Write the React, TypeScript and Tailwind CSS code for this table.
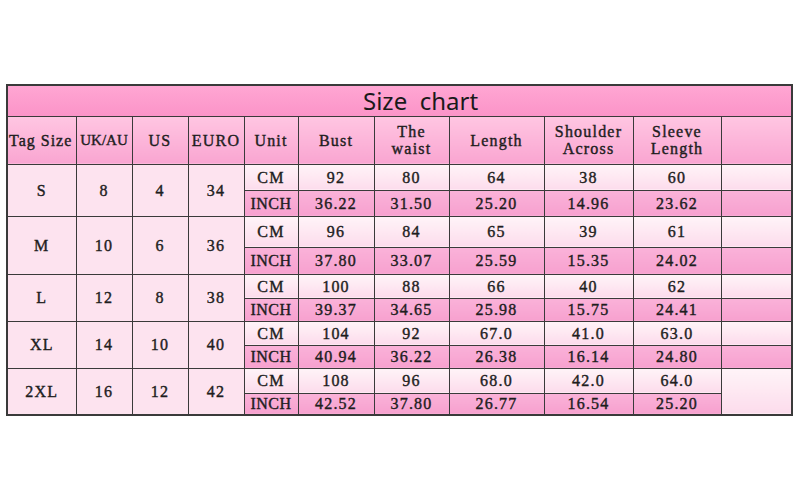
const HEAD = ["Tag Size", "UK/AU", "US", "EURO", "Unit", "Bust", "The waist", "Length", "Shoulder Across", "Sleeve Length", ""];
const WIDTHS = ["w-[69px]", "w-[56px]", "w-[56px]", "w-[56px]", "w-[54px]", "w-[76px]", "w-[75px]", "w-[95px]", "w-[89px]", "w-[88px]", "w-[71px]"];

interface Size {
  tag: string;
  uk: string;
  us: string;
  euro: string;
  cm: string[];
  inch: string[];
  h1: string;
  h2: string;
}

const SIZES: Size[] = [
  { tag: "S", uk: "8", us: "4", euro: "34", cm: ["92", "80", "64", "38", "60"], inch: ["36.22", "31.50", "25.20", "14.96", "23.62"], h1: "h-[26px]", h2: "h-[26px]" },
  { tag: "M", uk: "10", us: "6", euro: "36", cm: ["96", "84", "65", "39", "61"], inch: ["37.80", "33.07", "25.59", "15.35", "24.02"], h1: "h-[31px]", h2: "h-[27px]" },
  { tag: "L", uk: "12", us: "8", euro: "38", cm: ["100", "88", "66", "40", "62"], inch: ["39.37", "34.65", "25.98", "15.75", "24.41"], h1: "h-[24px]", h2: "h-[23px]" },
  { tag: "XL", uk: "14", us: "10", euro: "40", cm: ["104", "92", "67.0", "41.0", "63.0"], inch: ["40.94", "36.22", "26.38", "16.14", "24.80"], h1: "h-[24px]", h2: "h-[23px]" },
  { tag: "2XL", uk: "16", us: "12", euro: "42", cm: ["108", "96", "68.0", "42.0", "64.0"], inch: ["42.52", "37.80", "26.77", "16.54", "25.20"], h1: "h-[25px]", h2: "h-[22px]" },
];

const cell = "border border-[#3a3a3a] text-center p-0 leading-[17px] whitespace-nowrap";
const light = "bg-[#fde3ef]";
const cmBg = "bg-linear-to-b from-[#fff4f8] to-[#fcdcec]";
const inchBg = "bg-linear-to-b from-[#fab2d9] to-[#f7a1cf]";

export default function App() {
  return (
    <div className="w-[800px] h-[500px] bg-white pt-[84px] pl-[6px]">
      <table
        className="table-fixed border-collapse border-2 border-[#3a3a3a] w-[785px] text-[#1e1e1e] text-[16px] font-normal tracking-[1.2px] [-webkit-text-stroke:0.4px_#1e1e1e]"
        style={{ fontFamily: '"Liberation Serif", "Noto Sans CJK SC", serif' }}
      >
        <colgroup>
          {WIDTHS.map((w, i) => (
            <col key={i} className={w} />
          ))}
        </colgroup>
        <tbody>
          <tr className="h-[31px]">
            <td
              colSpan={11}
              className="border border-[#3a3a3a] bg-linear-to-b from-[#ffa6d3] to-[#fb94c8] text-center pl-[42px] text-[24px] font-normal leading-[28px] text-[#1a1a1a] tracking-normal [-webkit-text-stroke:0px]"
              style={{ fontFamily: '"Noto Sans", "Open Sans", sans-serif' }}
            >
              Size&nbsp;&nbsp;chart
            </td>
          </tr>
          <tr className="h-[48px]">
            {HEAD.map((h, i) => (
              <td
                key={i}
                className={`${cell} bg-linear-to-b from-[#ffc6e2] to-[#f9a5d1] ${i === 0 ? "text-left pl-[1px] tracking-[1px]" : ""} ${i === 1 ? "tracking-[0px] text-[15px]" : ""}`}
              >
                {h.includes(" ") && i > 0 ? (
                  <>
                    {h.split(" ")[0]}
                    <br />
                    {h.split(" ")[1]}
                  </>
                ) : (
                  h
                )}
              </td>
            ))}
          </tr>
          {SIZES.map((s, si) => {
            const last = si === SIZES.length - 1;
            return [
              <tr key={s.tag + "cm"} className={s.h1}>
                <td rowSpan={2} className={`${cell} ${light}`}>{s.tag}</td>
                <td rowSpan={2} className={`${cell} ${light}`}>{s.uk}</td>
                <td rowSpan={2} className={`${cell} ${light}`}>{s.us}</td>
                <td rowSpan={2} className={`${cell} ${light}`}>{s.euro}</td>
                <td className={`${cell} ${cmBg}`}>CM</td>
                {s.cm.map((v, i) => (
                  <td key={i} className={`${cell} ${cmBg}`}>{v}</td>
                ))}
                {last ? (
                  <td rowSpan={2} className={`${cell} ${cmBg}`}></td>
                ) : (
                  <td className={`${cell} ${cmBg}`}></td>
                )}
              </tr>,
              <tr key={s.tag + "in"} className={s.h2}>
                <td className={`${cell} ${inchBg} tracking-[0.5px]`}>INCH</td>
                {s.inch.map((v, i) => (
                  <td key={i} className={`${cell} ${inchBg}`}>{v}</td>
                ))}
                {!last && <td className={`${cell} ${inchBg}`}></td>}
              </tr>,
            ];
          })}
        </tbody>
      </table>
    </div>
  );
}
